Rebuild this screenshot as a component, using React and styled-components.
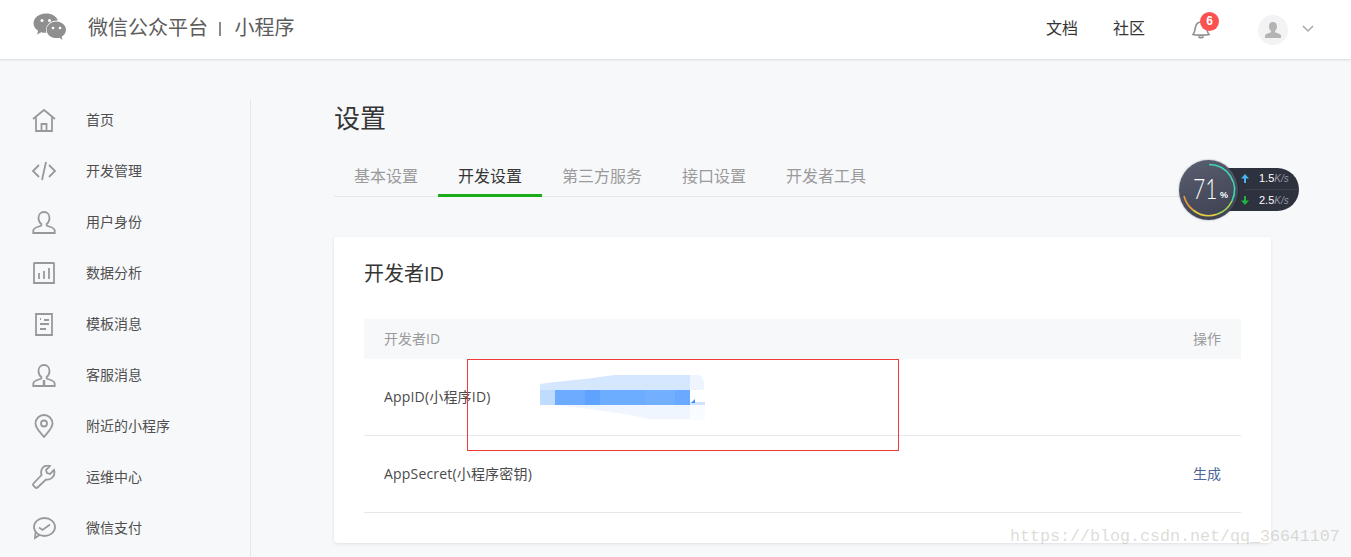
import React from "react";
import styled, { createGlobalStyle } from "styled-components";

const Global = createGlobalStyle`
  html, body { margin: 0; padding: 0; background: #f7f8fa; }
  body { font-family: "Open Sans", "Noto Sans CJK SC", "Liberation Sans", sans-serif; }
  * { box-sizing: border-box; }
`;

const Page = styled.div`
  position: relative;
  width: 1351px;
  height: 557px;
  overflow: hidden;
  background: #f7f8fa;
`;
const Header = styled.header`
  height: 59px;
  background: #fff;
  box-shadow: 0 1px 2px rgba(150, 150, 150, 0.3);
  display: flex;
  align-items: center;
  padding-left: 33px;
  position: relative;
`;
const Brand = styled.div`
  display: flex;
  align-items: center;
  font-size: 20px;
  color: #5c5c5c;
  line-height: 28px;
  margin-top: -3px;
  margin-left: 21px;
`;
const Sep = styled.span`
  width: 2px;
  height: 14px;
  background: #8a8a8a;
  margin: 2px 14px 0 10.500px;
`;
const HeaderRight = styled.div`
  margin-left: auto;
  display: flex;
  align-items: center;
  padding-right: 37px;
`;
const HeaderLink = styled.a`
  font-size: 16px;
  color: #353535;
  margin-right: 35px;
  line-height: 22px;
  margin-top: -4px;
`;
const BellWrap = styled.div`
  position: relative;
  width: 20px;
  height: 20px;
  margin: 0 47px 1px 11px;
`;
const Badge = styled.span`
  position: absolute;
  left: 9px;
  top: -7px;
  width: 19px;
  height: 19px;
  border-radius: 50%;
  background: #fa5151;
  color: #fff;
  font: 700 12px/19px "Liberation Sans", sans-serif;
  text-align: center;
`;
const Avatar = styled.div`
  width: 30px;
  height: 30px;
  border-radius: 50%;
  background: #f3f3f5;
  display: flex;
  align-items: center;
  justify-content: center;
  margin-right: 15px;
`;
const Body = styled.div`
  display: flex;
  padding-top: 40px;
`;
const Sidebar = styled.nav`
  width: 251px;
  height: 470px;
  border-right: 1px solid #e7e7eb;
  padding-left: 32px;
  flex-shrink: 0;
`;
const NavItem = styled.div`
  height: 51px;
  display: flex;
  align-items: center;
  font-size: 14px;
  color: #4f4f4f;
  gap: 30px;
  margin-top: ${(p) => (p.$first ? "-5px" : "0")};
`;
const NavLabel = styled.span`
  margin-top: -2px;
`;
const Content = styled.main`
  width: 937px;
  margin-left: 83px;
`;
const Title = styled.h1`
  margin: 0;
  font-size: 26px;
  font-weight: 400;
  color: #353535;
  line-height: 38px;
`;
const Tabs = styled.div`
  display: flex;
  height: 38px;
  margin-top: 22px;
  border-bottom: 1px solid #e7e7eb;
`;
const Tab = styled.div`
  padding: 0 20px;
  height: 38px;
  line-height: 34px;
  font-size: 16px;
  color: ${(p) => (p.$active ? "#353535" : "#9a9a9a")};
  border-bottom: ${(p) => (p.$active ? "3px solid #1aad19" : "none")};
`;
const Card = styled.section`
  margin-top: 40px;
  height: 306px;
  background: #fff;
  border-radius: 3px;
  box-shadow: 0 1px 3px rgba(180, 180, 190, 0.35);
  padding: 20px 30px 0;
`;
const CardTitle = styled.h2`
  margin: 0;
  font-size: 20px;
  font-weight: 400;
  color: #353535;
  line-height: 34px;
`;
const TableHead = styled.div`
  margin-top: 28px;
  height: 40px;
  background: #f7f8fa;
  display: flex;
  align-items: center;
  justify-content: space-between;
  padding: 0 20px 2px;
  font-size: 14px;
  color: #9a9a9a;
`;
const Row = styled.div`
  height: 77px;
  border-bottom: 1px solid #e7e7eb;
  display: flex;
  align-items: center;
  justify-content: space-between;
  padding: 0 20px 2px;
  font-size: 14px;
  color: #4a4a4a;
`;
const RowLabel = styled.span`
  letter-spacing: 0.180px;
`;
const ActionLink = styled.a`
  color: #4a6596;
`;
const RedBox = styled.div`
  position: absolute;
  left: 467px;
  top: 359px;
  width: 432px;
  height: 92px;
  border: 1px solid #f03a3a;
  pointer-events: none;
`;
const Smear = styled.svg`
  position: absolute;
  left: 540px;
  top: 374px;
`;
const Watermark = styled.div`
  position: absolute;
  left: 1010px;
  top: 526px;
  font-family: "Liberation Mono", "DejaVu Sans Mono", monospace;
  font-size: 16.67px;
  line-height: 22px;
  color: rgba(170, 170, 160, 0.42);
  white-space: nowrap;
`;
const Meter = styled.div`
  position: absolute;
  left: 1178px;
  top: 160px;
  width: 121px;
  height: 60px;
`;
const MeterPill = styled.div`
  position: absolute;
  left: 30px;
  top: 8px;
  width: 91px;
  height: 43px;
  border-radius: 0 22px 22px 0;
  background: #2e313e;
  display: flex;
  flex-direction: column;
  padding-left: 37px;
`;
const Speed = styled.div`
  flex: 1;
  display: flex;
  align-items: center;
  gap: 10px;
  border-top: ${(p) => (p.$second ? "1px solid #3d404d" : "none")};
  font: 11px/14px "Liberation Sans", sans-serif;
  color: #fff;
  white-space: nowrap;
`;
const Unit = styled.span`
  color: #9397a5;
  font-size: 10px;
  font-style: italic;
`;
const Dial = styled.div`
  position: absolute;
  left: 1px;
  top: 0;
  width: 59px;
  height: 60px;
  border-radius: 50%;
  background: linear-gradient(160deg, #5a5f71, #3b3f4f);
  box-shadow: 0 0 2px rgba(0, 0, 0, 0.4);
`;
const DialArc = styled.svg`
  position: absolute;
  inset: 0;
`;
const DialValue = styled.div`
  position: absolute;
  left: 14px;
  top: 12px;
  color: #fff;
  font: 300 27px/34px "Lato", "Liberation Sans", sans-serif;
  transform: scaleX(0.78);
  transform-origin: left center;
`;
const DialPct = styled.span`
  position: absolute;
  left: 41px;
  top: 30px;
  color: #fff;
  font: 700 9px/10px "Liberation Sans", sans-serif;
`;

const Ic = ({ children }) => (
  <svg width="24" height="24" viewBox="0 0 24 24" fill="none" stroke="#999" strokeWidth="1.8" style={{ flexShrink: 0 }}>
    {children}
  </svg>
);

const icons = {
  home: (
    <Ic>
      <path d="M1 11 12 2l11 9M4 9v14h16V9" />
      <path d="M9.500 23v-7h5v7" />
    </Ic>
  ),
  code: (
    <Ic>
      <path d="M7 6l-6 6 6 6M17 6l6 6-6 6M14 3l-4 18" />
    </Ic>
  ),
  user: (
    <Ic>
      <path d="M12 2c3.500 0 5.500 2.600 5.500 6 0 3-1.500 5-2.800 6v1.500c2 1.200 8 2 8 5V23H1.300v-2.500c0-3 6-3.800 8-5V14C8 13 6.500 11 6.500 8c0-3.400 2-6 5.500-6z" />
    </Ic>
  ),
  chart: (
    <Ic>
      <path d="M1.500 2h21M2 2v20h20V2" />
      <path d="M7 12v6M12 10v8M17 7v11" />
    </Ic>
  ),
  doc: (
    <Ic>
      <path d="M4 2h16v21H4z" />
      <path d="M8 7h1M12 8h5M8 12h9M8 17h6" />
    </Ic>
  ),
  service: (
    <Ic>
      <path d="M12 2c3.500 0 5.500 2.600 5.500 6 0 3-1.500 5-2.800 6v1.500c2 1.200 8 2 8 5V23H1.300v-2.500c0-3 6-3.800 8-5V14C8 13 6.500 11 6.500 8c0-3.400 2-6 5.500-6z" />
      <path d="M12 17v5" strokeWidth="2.500" />
    </Ic>
  ),
  pin: (
    <Ic>
      <path d="M12 23C7 17 3.500 14 3.500 9.500a8.500 8.500 0 0 1 17 0C20.500 14 17 17 12 23z" />
      <circle cx="12" cy="9.500" r="3" />
    </Ic>
  ),
  wrench: (
    <Ic>
      <path d="M22 5l-4 4-3-1-1-3 4-4c-3-1-6 0-7.500 2S9 8 9.500 10L1.500 18.500c-.7.800-.7 1.500 0 2.200l1.800 1.800c.8.700 1.500.7 2.200 0L14 14.500c2 .5 4.300-.2 6-1.600 1.800-1.700 3-5 2-7.900z" />
    </Ic>
  ),
  pay: (
    <Ic>
      <ellipse cx="12.500" cy="11" rx="10.500" ry="9" />
      <path d="M3.500 16.500 3 22l4.500-3M7 11.500l3.500 2.500L18 8.500" />
    </Ic>
  ),
};

const navItems = [
  ["home", "首页"],
  ["code", "开发管理"],
  ["user", "用户身份"],
  ["chart", "数据分析"],
  ["doc", "模板消息"],
  ["service", "客服消息"],
  ["pin", "附近的小程序"],
  ["wrench", "运维中心"],
  ["pay", "微信支付"],
];

const tabs = ["基本设置", "开发设置", "第三方服务", "接口设置", "开发者工具"];

const WeChatLogo = () => (
  <svg width="34" height="28" viewBox="0 0 34 28" style={{ flexShrink: 0, marginTop: -5 }}>
    <path d="M13 0.500C6 .5.500 4.800.500 10.200c0 3.100 1.800 5.800 4.600 7.600L4 21.500l4.200-2.300c1.300.4 2.800.6 4.300.6l.9 0c-.3-.9-.4-1.800-.4-2.800 0-5.300 5-9.500 11.200-9.500h.6C23.600 3.200 18.800.5 13 .5z" fill="#8f8f8f" />
    <path d="M33 16.800c0-4.600-4.300-8.300-9.700-8.300s-9.700 3.700-9.700 8.300 4.300 8.300 9.700 8.300c1.100 0 2.200-.2 3.200-.4l3 2.300-.8-3.300C31.400 22.200 33 19.700 33 16.800z" fill="#8f8f8f" />
    <circle cx="9" cy="7.500" r="1.500" fill="#fff" />
    <circle cx="16.500" cy="7.500" r="1.500" fill="#fff" />
    <circle cx="20" cy="15" r="1.300" fill="#fff" />
    <circle cx="27" cy="15" r="1.300" fill="#fff" />
  </svg>
);

const Bell = () => (
  <svg width="20" height="20" viewBox="0 0 20 20" fill="none" stroke="#8f8f8f" strokeWidth="1.700">
    <path d="M2 15.500c1.500-1.500 1.800-3 2.200-6C4.700 5.500 7 3 10 3s5.300 2.500 5.800 6.500c.4 3 .7 4.500 2.200 6-2 .8-14 .8-16 0z" />
    <path d="M7.500 17.500c1 1.500 4 1.500 5 0" />
  </svg>
);

const AvatarIcon = () => (
  <svg width="16" height="16" viewBox="0 0 16 16" fill="#b4b4b4">
    <path d="M8 0c2.500 0 4 1.800 4 4.500 0 2-.9 3.500-2 4.500v1.300c1.500.8 6 1.300 6 3.500V16H0v-2.200c0-2.200 4.500-2.700 6-3.500V9C4.900 8 4 6.500 4 4.500 4 1.800 5.500 0 8 0z" />
  </svg>
);

const Chevron = () => (
  <svg width="12" height="8" viewBox="0 0 12 8" fill="none" stroke="#a8a8a8" strokeWidth="1.500" style={{ marginBottom: 2, marginLeft: -1 }}>
    <path d="M1 1l5 5 5-5" />
  </svg>
);

const Arrow = ({ color, down }) => (
  <svg width="8" height="9" viewBox="0 0 8 9" fill={color} style={{ transform: down ? "rotate(180deg)" : "none", flexShrink: 0, marginLeft: -4 }}>
    <path d="M4 0 8 4.500H5V9H3V4.500H0z" />
  </svg>
);

export default function App() {
  return (
    <Page>
      <Global />
      <Header>
        <WeChatLogo />
        <Brand>
          微信公众平台<Sep />小程序
        </Brand>
        <HeaderRight>
          <HeaderLink>文档</HeaderLink>
          <HeaderLink>社区</HeaderLink>
          <BellWrap>
            <Bell />
            <Badge>6</Badge>
          </BellWrap>
          <Avatar>
            <AvatarIcon />
          </Avatar>
          <Chevron />
        </HeaderRight>
      </Header>
      <Body>
        <Sidebar>
          {navItems.map(([icon, label], i) => (
            <NavItem key={label} $first={i === 0}>
              {icons[icon]}
              <NavLabel>{label}</NavLabel>
            </NavItem>
          ))}
        </Sidebar>
        <Content>
          <Title>设置</Title>
          <Tabs>
            {tabs.map((t, i) => (
              <Tab key={t} $active={i === 1}>
                {t}
              </Tab>
            ))}
          </Tabs>
          <Card>
            <CardTitle>开发者ID</CardTitle>
            <TableHead>
              <span>开发者ID</span>
              <span>操作</span>
            </TableHead>
            <Row>
              <RowLabel>AppID(小程序ID)</RowLabel>
            </Row>
            <Row>
              <RowLabel>AppSecret(小程序密钥)</RowLabel>
              <ActionLink>生成</ActionLink>
            </Row>
          </Card>
        </Content>
      </Body>

      <Smear width="166" height="48" viewBox="0 0 166 48">
        <path d="M0 10 15 8 45 5 75 1h75v15H0z" fill="#d5e6ff" />
        <path d="M150 1h8q6 2 6 9v6h-14z" fill="#eef5ff" />
        <path d="M15 31 50 35 90 41 110 45h40V31z" fill="#eff6ff" />
        <rect x="150" y="31" width="15" height="15" fill="#f8fbff" />
        <rect x="0" y="16" width="15" height="15" fill="#bfdcff" />
        <rect x="15" y="16" width="30" height="15" fill="#6cabff" />
        <rect x="45" y="16" width="15" height="15" fill="#5fa3ff" />
        <rect x="60" y="16" width="45" height="15" fill="#6dadff" />
        <rect x="105" y="16" width="30" height="15" fill="#72b0ff" />
        <rect x="135" y="16" width="15" height="15" fill="#69a9ff" />
        <rect x="150" y="28" width="15" height="3" fill="#cfe2ff" />
        <path d="M151 29l4-4v4z" fill="#3d8bff" />
      </Smear>
      <RedBox />

      <Meter>
        <MeterPill>
          <Speed>
            <Arrow color="#46b4ef" />
            <span>
              1.5<Unit>K/s</Unit>
            </span>
          </Speed>
          <Speed $second>
            <Arrow color="#1fb53a" down />
            <span>
              2.5<Unit>K/s</Unit>
            </span>
          </Speed>
        </MeterPill>
        <Dial>
          <DialArc width="60" height="60" viewBox="0 0 60 60" fill="none" strokeWidth="1.600">
            <path d="M30 4.500A25.500 25.500 0 0 1 53 41" stroke="#3fd6b4" />
            <path d="M53 41A25.500 25.500 0 0 1 38 54.200" stroke="#a6d85a" />
            <path d="M38 54.200A25.500 25.500 0 0 1 14 50" stroke="#e9cd45" />
            <path d="M14 50A25.500 25.500 0 0 1 5 36" stroke="#eb9b3c" />
          </DialArc>
          <DialValue>71</DialValue>
          <DialPct>%</DialPct>
        </Dial>
      </Meter>

      <Watermark>https://blog.csdn.net/qq_36641107</Watermark>
    </Page>
  );
}
